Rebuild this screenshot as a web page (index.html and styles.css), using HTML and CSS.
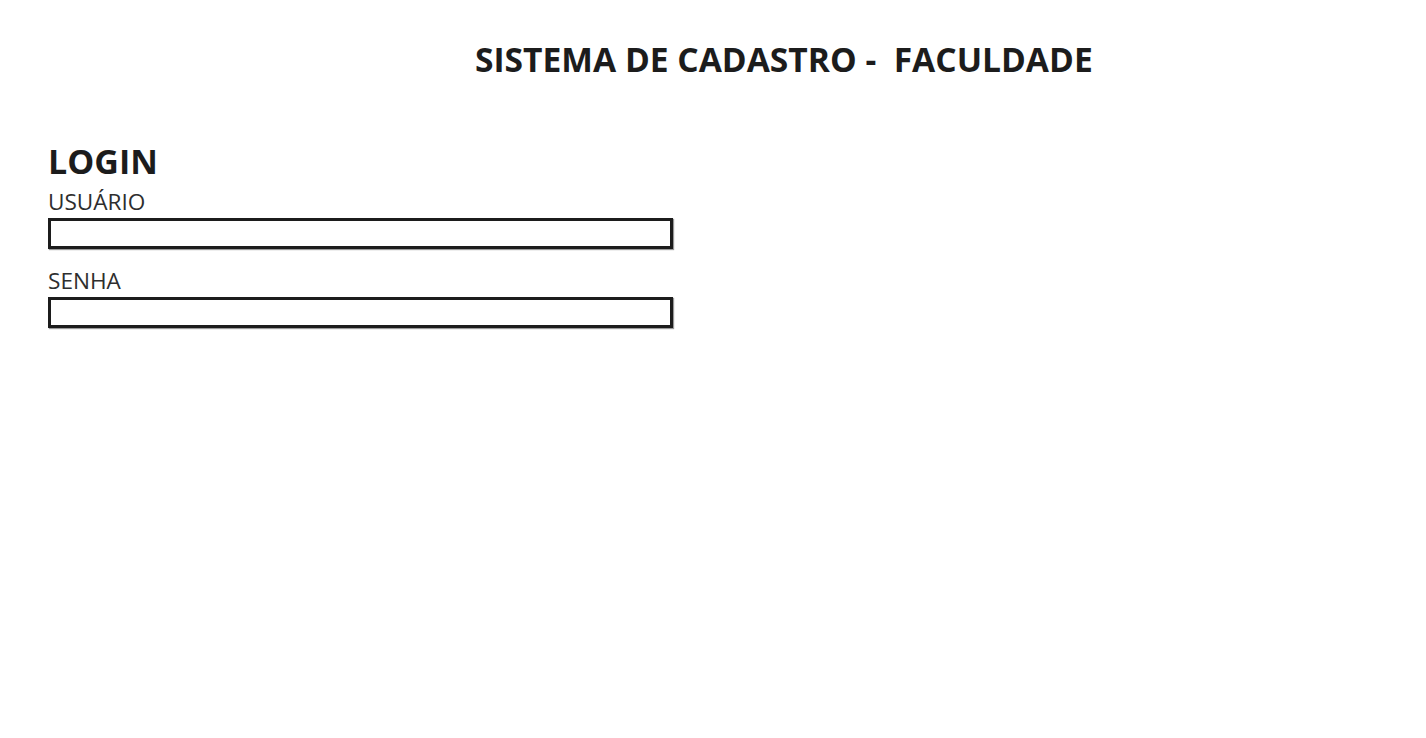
FILE: index.html
```html
<!DOCTYPE html>
<html lang="pt-BR">
<head>
<meta charset="utf-8">
<title>Sistema de Cadastro</title>
<link rel="stylesheet" href="styles.css">
</head>
<body>
<header class="topo">
  <h1 class="titulo">SISTEMA DE CADASTRO -&nbsp; FACULDADE</h1>
</header>
<main class="login">
  <h2 class="login-titulo">LOGIN</h2>
  <form class="form">
    <label class="campo">
      <span class="rotulo">USUÁRIO</span>
      <input class="entrada" type="text">
    </label>
    <label class="campo">
      <span class="rotulo">SENHA</span>
      <input class="entrada" type="password">
    </label>
  </form>
</main>
</body>
</html>
```
FILE: styles.css
```css
* { box-sizing: border-box; }
html, body { margin: 0; padding: 0; background: #fff; }
body {
  font-family: "Open Sans", "Noto Sans", sans-serif;
  color: #1c1c1c;
  width: 1426px;
  height: 738px;
  overflow: hidden;
}
.topo {
  padding: 38px 0 0 475px;
}
.titulo {
  margin: 0;
  font-size: 33.6px;
  font-weight: 700;
  line-height: 42px;
  white-space: pre;
}
.login {
  padding: 61px 0 0 48px;
}
.login-titulo {
  margin: 0;
  font-size: 34px;
  font-weight: 700;
  line-height: 40px;
}
.form {
  display: flex;
  flex-direction: column;
  gap: 16px;
  margin-top: 5px;
}
.campo {
  display: flex;
  flex-direction: column;
}
.rotulo {
  font-size: 22.6px;
  line-height: 32px;
  color: #2e2e2e;
}
.entrada {
  width: 625px;
  height: 31px;
  border: 3px solid #1c1c1c;
  box-shadow: 1px 1px 1px #999;
  background: #fff;
  margin: 0;
  padding: 0;
  outline: none;
}
```
